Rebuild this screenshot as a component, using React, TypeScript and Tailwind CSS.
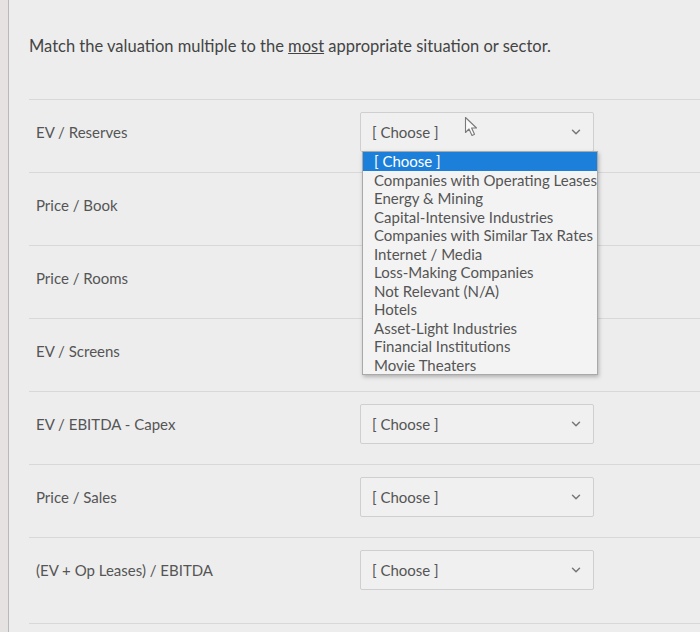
import { ChevronDown } from "lucide-react";

// Matching question: each valuation multiple gets a select; the first one is open.

const MULTIPLES = [
  "EV / Reserves",
  "Price / Book",
  "Price / Rooms",
  "EV / Screens",
  "EV / EBITDA - Capex",
  "Price / Sales",
  "(EV + Op Leases) / EBITDA",
];

const OPTIONS = [
  "[ Choose ]",
  "Companies with Operating Leases",
  "Energy & Mining",
  "Capital-Intensive Industries",
  "Companies with Similar Tax Rates",
  "Internet / Media",
  "Loss-Making Companies",
  "Not Relevant (N/A)",
  "Hotels",
  "Asset-Light Industries",
  "Financial Institutions",
  "Movie Theaters",
];

function Cursor() {
  return (
    <svg
      className="absolute left-[104px] top-[4px]"
      width="16"
      height="22"
      viewBox="0 0 16 22"
    >
      <path
        d="M1.5 1.5 L1.5 16.5 L5 13 L8 19.5 L10.5 18.3 L7.6 12 L12.5 12 Z"
        fill="#fafafa"
        stroke="#7a7a7a"
        strokeWidth="1.1"
        strokeLinejoin="round"
      />
    </svg>
  );
}

function Select({ open, hidden }: { open?: boolean; hidden?: boolean }) {
  // rows whose select sits under the open list only keep the space
  if (hidden) return <div className="w-[234px] h-[40px]" />;
  return (
    <div className="relative w-[234px]">
      <div className="h-[40px] flex items-center justify-between pl-[11px] pr-[10px] border border-[#cfcfcf] rounded-[2px] bg-[#f0f0f0] text-[15px] text-[#555]">
        <span>[ Choose ]</span>
        <ChevronDown className="w-[14px] h-[14px] text-[#777]" strokeWidth={2.5} />
      </div>
      {open && (
        <>
          <Cursor />
          <ul className="absolute left-[2px] top-[39px] z-10 w-[236px] border border-[#a9a9a9] bg-[#f3f3f3] shadow-[1px_2px_4px_rgba(0,0,0,0.25)] text-[15px] leading-[18.5px] text-[#555]">
            {OPTIONS.map((o, i) => (
              <li
                key={o}
                className={
                  i === 0
                    ? "pl-[11px] bg-[#1c7fd9] text-white"
                    : "pl-[11px] whitespace-nowrap"
                }
              >
                {o}
              </li>
            ))}
          </ul>
        </>
      )}
    </div>
  );
}

export default function App() {
  return (
    <div
      className="w-[700px] h-[632px] flex bg-[#ededed] overflow-hidden"
      style={{ fontFamily: "Lato, 'Open Sans', sans-serif" }}
    >
      <div className="w-[9px] shrink-0 bg-[#e6e2e1] border-r border-[#b9b9b9]" />
      <div className="flex-1 pl-[20px]">
        <p className="pt-[34px] text-[16.5px] leading-[24px] text-[#444]">
          Match the valuation multiple to the <span className="underline">most</span>{" "}
          appropriate situation or sector.
        </p>
        <div className="mt-[41px] border-b border-[#d8d8d8]">
          {MULTIPLES.map((m, i) => (
            <div
              key={m}
              className={`${
                i === MULTIPLES.length - 1 ? "h-[86px]" : "h-[73px]"
              } flex items-start pt-[12px] border-t border-[#d8d8d8]`}
            >
              <div className="w-[331px] pl-[7px] h-[40px] flex items-center text-[15px] text-[#555]">
                {m}
              </div>
              <Select open={i === 0} hidden={i > 0 && i < 4} />
            </div>
          ))}
        </div>
      </div>
    </div>
  );
}
